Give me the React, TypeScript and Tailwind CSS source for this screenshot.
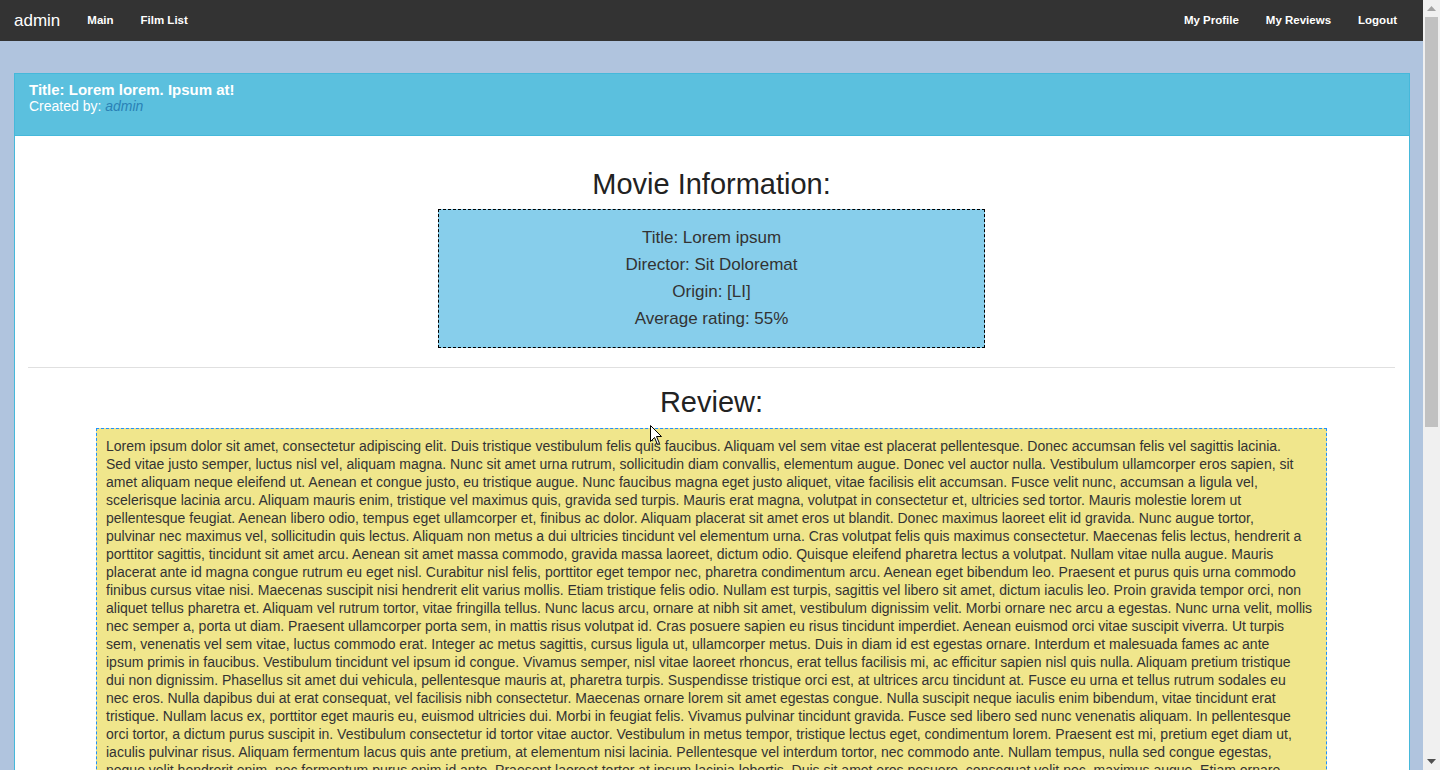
import React from "react";

const reviewLines = [
  "Lorem ipsum dolor sit amet, consectetur adipiscing elit. Duis tristique vestibulum felis quis faucibus. Aliquam vel sem vitae est placerat pellentesque. Donec accumsan felis vel sagittis lacinia.",
  "Sed vitae justo semper, luctus nisl vel, aliquam magna. Nunc sit amet urna rutrum, sollicitudin diam convallis, elementum augue. Donec vel auctor nulla. Vestibulum ullamcorper eros sapien, sit",
  "amet aliquam neque eleifend ut. Aenean et congue justo, eu tristique augue. Nunc faucibus magna eget justo aliquet, vitae facilisis elit accumsan. Fusce velit nunc, accumsan a ligula vel,",
  "scelerisque lacinia arcu. Aliquam mauris enim, tristique vel maximus quis, gravida sed turpis. Mauris erat magna, volutpat in consectetur et, ultricies sed tortor. Mauris molestie lorem ut",
  "pellentesque feugiat. Aenean libero odio, tempus eget ullamcorper et, finibus ac dolor. Aliquam placerat sit amet eros ut blandit. Donec maximus laoreet elit id gravida. Nunc augue tortor,",
  "pulvinar nec maximus vel, sollicitudin quis lectus. Aliquam non metus a dui ultricies tincidunt vel elementum urna. Cras volutpat felis quis maximus consectetur. Maecenas felis lectus, hendrerit a",
  "porttitor sagittis, tincidunt sit amet arcu. Aenean sit amet massa commodo, gravida massa laoreet, dictum odio. Quisque eleifend pharetra lectus a volutpat. Nullam vitae nulla augue. Mauris",
  "placerat ante id magna congue rutrum eu eget nisl. Curabitur nisl felis, porttitor eget tempor nec, pharetra condimentum arcu. Aenean eget bibendum leo. Praesent et purus quis urna commodo",
  "finibus cursus vitae nisi. Maecenas suscipit nisi hendrerit elit varius mollis. Etiam tristique felis odio. Nullam est turpis, sagittis vel libero sit amet, dictum iaculis leo. Proin gravida tempor orci, non",
  "aliquet tellus pharetra et. Aliquam vel rutrum tortor, vitae fringilla tellus. Nunc lacus arcu, ornare at nibh sit amet, vestibulum dignissim velit. Morbi ornare nec arcu a egestas. Nunc urna velit, mollis",
  "nec semper a, porta ut diam. Praesent ullamcorper porta sem, in mattis risus volutpat id. Cras posuere sapien eu risus tincidunt imperdiet. Aenean euismod orci vitae suscipit viverra. Ut turpis",
  "sem, venenatis vel sem vitae, luctus commodo erat. Integer ac metus sagittis, cursus ligula ut, ullamcorper metus. Duis in diam id est egestas ornare. Interdum et malesuada fames ac ante",
  "ipsum primis in faucibus. Vestibulum tincidunt vel ipsum id congue. Vivamus semper, nisl vitae laoreet rhoncus, erat tellus facilisis mi, ac efficitur sapien nisl quis nulla. Aliquam pretium tristique",
  "dui non dignissim. Phasellus sit amet dui vehicula, pellentesque mauris at, pharetra turpis. Suspendisse tristique orci est, at ultrices arcu tincidunt at. Fusce eu urna et tellus rutrum sodales eu",
  "nec eros. Nulla dapibus dui at erat consequat, vel facilisis nibh consectetur. Maecenas ornare lorem sit amet egestas congue. Nulla suscipit neque iaculis enim bibendum, vitae tincidunt erat",
  "tristique. Nullam lacus ex, porttitor eget mauris eu, euismod ultricies dui. Morbi in feugiat felis. Vivamus pulvinar tincidunt gravida. Fusce sed libero sed nunc venenatis aliquam. In pellentesque",
  "orci tortor, a dictum purus suscipit in. Vestibulum consectetur id tortor vitae auctor. Vestibulum in metus tempor, tristique lectus eget, condimentum lorem. Praesent est mi, pretium eget diam ut,",
  "iaculis pulvinar risus. Aliquam fermentum lacus quis ante pretium, at elementum nisi lacinia. Pellentesque vel interdum tortor, nec commodo ante. Nullam tempus, nulla sed congue egestas,",
  "neque velit hendrerit enim, nec fermentum purus enim id ante. Praesent laoreet tortor at ipsum lacinia lobortis. Duis sit amet eros posuere, consequat velit nec, maximus augue. Etiam ornare",
  "mauris quis lectus pretium, non dictum nisl vehicula. Sed sit amet nunc sed neque tempor dignissim. Curabitur vel dui vitae nibh fermentum placerat in sed ipsum. Nam vitae sapien et",
  "tortor faucibus viverra. Integer tincidunt, magna nec volutpat laoreet, ligula arcu luctus nulla, in cursus lacus libero vitae risus.",
];

export default function App() {
  return (
    <div className="flex h-[770px] w-full overflow-hidden font-['Liberation_Sans',Arial,sans-serif] text-[#333]">
      <div className="relative flex min-w-0 flex-1 flex-col bg-[#b0c4de]">
        <nav className="flex h-[41px] shrink-0 items-center justify-between bg-[#333333] pl-[14px] pr-[26px] text-white">
          <div className="flex items-center gap-[27px]">
            <span className="text-[17px] leading-none">admin</span>
            <span className="text-[11.5px] font-bold">Main</span>
            <span className="text-[11.5px] font-bold">Film List</span>
          </div>
          <div className="flex items-center gap-[27px] text-[11.5px] font-bold">
            <span>My Profile</span>
            <span>My Reviews</span>
            <span>Logout</span>
          </div>
        </nav>

        <div className="pl-[14px] pr-[13px] pt-[32px]">
          <div className="border border-[#46b8da] bg-white">
            <div className="border-b border-[#46b8da] bg-[#5bc0de] pb-[21px] pl-[14px] pt-[8px] text-[14px] leading-[16px] text-white">
              <div className="text-[15px] font-bold">Title: Lorem lorem. Ipsum at!</div>
              <div>
                Created by: <span className="italic text-[#2a82b6]">admin</span>
              </div>
            </div>

            <div className="pb-[40px] pl-[13px] pr-[14px] pt-[32px]">
              <h2 className="mb-[9px] text-center text-[29px] leading-[32px] text-[#222]">Movie Information:</h2>
              <div className="mx-auto w-[547px] border border-dashed border-black bg-[#87ceeb] pb-[15px] pt-[14px] text-center text-[17px] leading-[27px]">
                <p>Title: Lorem ipsum</p>
                <p>Director: Sit Doloremat</p>
                <p>Origin: [LI]</p>
                <p>Average rating: 55%</p>
              </div>

              <hr className="mt-[19px] border-t border-[#e0e0e0]" />

              <h2 className="mb-[10px] mt-[18px] text-center text-[29px] leading-[32px] text-[#222]">Review:</h2>
              <div className="mx-auto w-[1231px] border border-dashed border-[#1e90ff] bg-[#f0e68c] px-[9px] pb-[8px] pt-[8px] text-[14px] leading-[18px]">
                {reviewLines.map((line, i) => (
                  <div key={i} className="whitespace-nowrap">
                    {line}
                  </div>
                ))}
              </div>
            </div>
          </div>
        </div>

        <svg
          className="absolute left-[650px] top-[425px]"
          width="13"
          height="21"
          viewBox="0 0 13 21"
        >
          <path
            d="M0.5 0.5 L0.5 16.5 L4.5 12.5 L7.5 19.5 L9.5 18.5 L6.5 11.5 L11.5 11.5 Z"
            fill="white"
            stroke="black"
            strokeWidth="1"
          />
        </svg>
      </div>

      <div className="flex w-[17px] shrink-0 flex-col bg-[#f0f0f0]">
        <div className="flex h-[17px] items-center justify-center">
          <svg width="9" height="5" viewBox="0 0 9 5">
            <path d="M0 5 L4.5 0 L9 5 Z" fill="#a3a3a3" />
          </svg>
        </div>
        <div className="flex-1 px-[2px]">
          <div className="h-[410px] bg-[#c1c1c1]" />
        </div>
        <div className="flex h-[17px] items-center justify-center">
          <svg width="9" height="5" viewBox="0 0 9 5">
            <path d="M0 0 L9 0 L4.5 5 Z" fill="#505050" />
          </svg>
        </div>
      </div>
    </div>
  );
}
